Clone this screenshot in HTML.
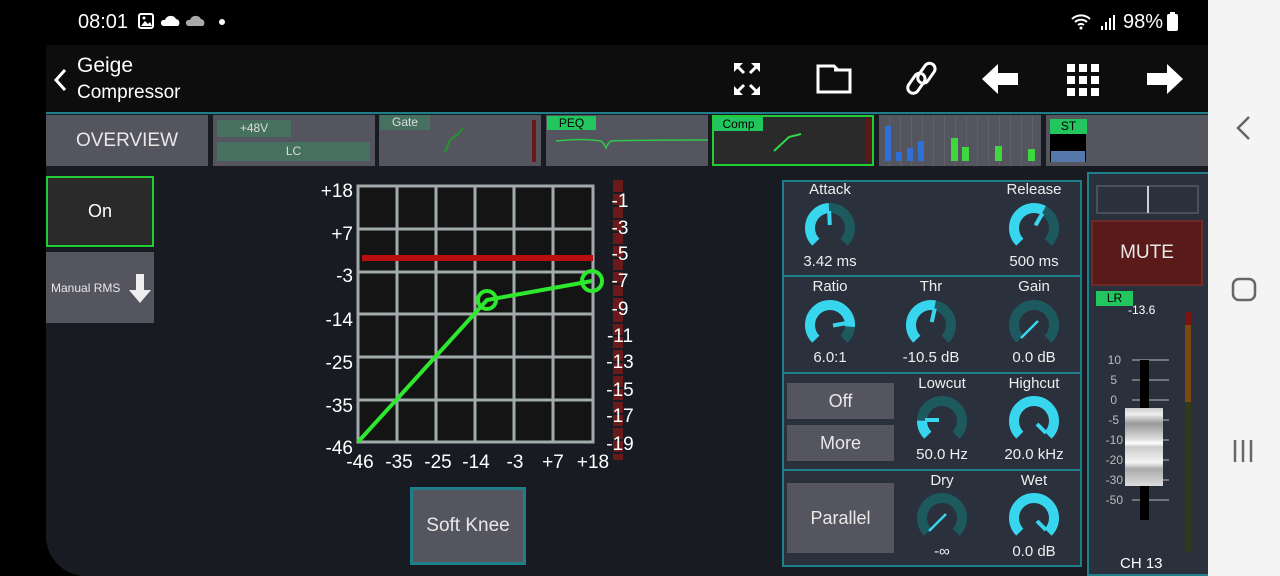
<!DOCTYPE html>
<html><head><meta charset="utf-8">
<style>
*{margin:0;padding:0;box-sizing:border-box}
body{width:1280px;height:576px;background:#000;overflow:hidden;position:relative;font-family:"Liberation Sans",sans-serif;color:#fff}
.a{position:absolute}
.t{position:absolute;white-space:nowrap}
.btn{position:absolute;background:#55555f;color:#e8e8e8;display:flex;align-items:center;justify-content:center}
.pan{position:absolute;background:#2a303c;border:2px solid #1e7f8a}
.lbl{position:absolute;font-size:15px;color:#eee;text-align:center;width:100px;transform:translateX(-50%)}
</style></head><body>
<div class="t" style="left:78px;top:11px;font-size:20px">08:01</div>
<svg class="a" style="left:138px;top:13px" width="90" height="20">
<rect x="1" y="1" width="14" height="14" rx="2" fill="none" stroke="#fff" stroke-width="2"/><path d="M3 13 L7 8 L10 11 L12 9 L14 13Z" fill="#fff"/><circle cx="6" cy="5" r="1.5" fill="#fff"/>
<path d="M25 13 h15 a4 4 0 0 0 -2 -7 a6 6 0 0 0 -11 1 a3 3 0 0 0 -2 6z" fill="#fff"/>
<path d="M50 13 h15 a4 4 0 0 0 -2 -7 a6 6 0 0 0 -11 1 a3 3 0 0 0 -2 6z" fill="#aaa"/>
<circle cx="84" cy="9" r="3" fill="#fff"/></svg>
<svg class="a" style="left:1070px;top:11px" width="50" height="22">
<path d="M2 8 a13 13 0 0 1 18 0 M5 11 a9 9 0 0 1 12 0 M8 14 a5 5 0 0 1 6 0" stroke="#fff" stroke-width="2" fill="none"/><circle cx="11" cy="17" r="1.5" fill="#fff"/>
<rect x="31" y="15" width="2" height="4" fill="#fff"/><rect x="35" y="11" width="2" height="8" fill="#fff"/><rect x="39" y="7" width="2" height="12" fill="#fff"/><rect x="43" y="4" width="2" height="15" fill="#fff"/></svg>
<div class="t" style="left:1123px;top:11px;font-size:20px">98%</div>
<div class="a" style="left:1167px;top:14px;width:11px;height:17px;background:#fff;border-radius:2px"></div>
<div class="a" style="left:1170px;top:12px;width:5px;height:3px;background:#fff"></div>
<div class="a" style="left:1208px;top:0;width:72px;height:576px;background:#f4f4f4"></div>
<svg class="a" style="left:1208px;top:0" width="72" height="576">
<path d="M41 117 L30 128 L41 139" stroke="#666" stroke-width="2.5" fill="none"/>
<rect x="25" y="279" width="22" height="21" rx="6" fill="none" stroke="#666" stroke-width="2.5"/>
<path d="M27 440v22M35 440v22M43 440v22" stroke="#666" stroke-width="2.5"/></svg>
<div class="a" style="left:46px;top:45px;width:1162px;height:531px;background:#181b21;border-bottom-left-radius:40px;overflow:hidden">
<div class="a" style="left:0;top:0;width:1162px;height:67px;background:#0d0d0d"></div>
<div class="a" style="left:0;top:67px;width:1162px;height:2px;background:#1e7f8a"></div>
</div>
<svg class="a" style="left:50px;top:65px" width="20" height="30"><path d="M15 5 L6 15 L15 25" stroke="#fff" stroke-width="3" fill="none"/></svg>
<div class="t" style="left:77px;top:54px;font-size:21px">Geige</div>
<div class="t" style="left:77px;top:82px;font-size:19px">Compressor</div>
<svg class="a" style="left:720px;top:55px" width="480" height="50">
<g fill="#fff" stroke="#fff" stroke-width="3">
<path d="M16 10 L24 18 M38 10 L30 18 M16 38 L24 30 M38 38 L30 30" fill="none"/>
<path d="M14 8h9l-9 9z M40 8h-9l9 9z M14 40h9l-9-9z M40 40h-9l9-9z" stroke="none"/>
<path d="M98 11h16l4 4h12v22h-32z M114 15h16" fill="none" stroke-width="3"/>
<g fill="none" stroke-width="3"><rect x="185" y="23" width="22" height="11" rx="5.5" transform="rotate(-55 196 28)"/><rect x="195" y="13" width="22" height="11" rx="5.5" transform="rotate(-55 206 18)"/></g>
<path d="M262 24 L278 9 V18 H298 V30 H278 V39 Z" stroke="none"/>
<g stroke="none"><rect x="347" y="9" width="8" height="8"/><rect x="359" y="9" width="8" height="8"/><rect x="371" y="9" width="8" height="8"/><rect x="347" y="21" width="8" height="8"/><rect x="359" y="21" width="8" height="8"/><rect x="371" y="21" width="8" height="8"/><rect x="347" y="33" width="8" height="8"/><rect x="359" y="33" width="8" height="8"/><rect x="371" y="33" width="8" height="8"/></g>
<path d="M463 24 L447 9 V18 H427 V30 H447 V39 Z" stroke="none"/>
</g></svg>
<div class="btn" style="left:46px;top:115px;width:162px;height:51px;font-size:19px">OVERVIEW</div>
<div class="a" style="left:213px;top:115px;width:162px;height:51px;background:#55555f"></div>
<div class="t" style="left:217px;top:120px;width:74px;height:17px;background:#46705f;font-size:12px;text-align:center;line-height:17px;color:#ddd">+48V</div>
<div class="t" style="left:217px;top:142px;width:153px;height:19px;background:#46705f;font-size:12px;text-align:center;line-height:19px;color:#ddd">LC</div>
<div class="a" style="left:379px;top:115px;width:162px;height:51px;background:#55555f"></div>
<div class="t" style="left:380px;top:115px;width:50px;height:15px;background:#46705f;font-size:12px;text-align:center;line-height:15px;color:#ddd">Gate</div>
<div class="a" style="left:532px;top:120px;width:4px;height:42px;background:#6a1a1a"></div>
<svg class="a" style="left:379px;top:115px" width="162" height="51"><path d="M66 37 L71 25 L79 19 L84 13" stroke="#2a8a3a" stroke-width="2.5" fill="none"/></svg>
<div class="a" style="left:546px;top:115px;width:162px;height:51px;background:#55555f"></div>
<div class="t" style="left:547px;top:116px;width:49px;height:14px;background:#22c55e;font-size:12px;text-align:center;line-height:14px;color:#000">PEQ</div>
<svg class="a" style="left:546px;top:115px" width="162" height="51"><path d="M10 26 C30 24 40 24 55 26 Q58 28 60 33 Q62 28 65 26 C90 25 130 25 162 25" stroke="#2fc84a" stroke-width="1.5" fill="none"/></svg>
<div class="a" style="left:712px;top:115px;width:162px;height:51px;background:#2a2a2a;border:2px solid #22cc33"></div>
<div class="t" style="left:714px;top:117px;width:49px;height:14px;background:#22c55e;font-size:12px;text-align:center;line-height:14px;color:#000">Comp</div>
<div class="a" style="left:865px;top:118px;width:6px;height:44px;background:#5a1a1a"></div>
<svg class="a" style="left:712px;top:115px" width="162" height="51"><path d="M62 36 L77 22 L89 19" stroke="#2fd84a" stroke-width="2" fill="none"/></svg>
<div class="a" style="left:879px;top:115px;width:162px;height:51px;background:#55555f;background-image:repeating-linear-gradient(90deg,transparent 0 10px,#606068 10px 11px)"></div>
<svg class="a" style="left:879px;top:115px" width="162" height="51"><g fill="#2f6fd8"><rect x="6" y="11" width="6" height="35"/><rect x="17" y="37" width="6" height="9"/><rect x="28" y="33" width="6" height="13"/><rect x="39" y="26" width="6" height="20"/></g><g fill="#3ed83e"><rect x="72" y="23" width="7" height="23"/><rect x="83" y="32" width="7" height="14"/><rect x="116" y="31" width="7" height="15"/><rect x="149" y="34" width="7" height="12"/></g></svg>
<div class="a" style="left:1046px;top:115px;width:162px;height:51px;background:#55555f"></div>
<div class="t" style="left:1050px;top:119px;width:37px;height:15px;background:#22c55e;font-size:12px;text-align:center;line-height:15px;color:#000">ST</div>
<div class="a" style="left:1050px;top:134px;width:36px;height:28px;background:#000"></div>
<div class="a" style="left:1051px;top:151px;width:34px;height:11px;background:#5577aa"></div>
<div class="btn" style="left:46px;top:176px;width:108px;height:71px;background:#2a2a2a;border:2px solid #22cc33;font-size:18px;color:#fff">On</div>
<div class="btn" style="left:46px;top:252px;width:108px;height:71px;justify-content:flex-start;padding-left:5px;font-size:12px">Manual RMS</div>
<svg class="a" style="left:127px;top:272px" width="26" height="34"><path d="M9 2h8v16h7L13 31 2 18h7z" fill="#eee"/></svg>
<svg class="a" style="left:300px;top:170px" width="340" height="310" font-family="Liberation Sans" font-size="19" fill="#fff">
<rect x="58" y="16" width="235" height="256" fill="#141414"/>
<g stroke="#a2abab" stroke-width="3" fill="none">
<rect x="58" y="16" width="235" height="256"/>
<path d="M97 16V272M136 16V272M175 16V272M214 16V272M253 16V272M58 59H293M58 102H293M58 144H293M58 187H293M58 230H293"/></g>
<path d="M62 88H293" stroke="#b80e0e" stroke-width="6"/>
<path d="M58 272L187 130L292 111" stroke="#2ee82e" stroke-width="4" fill="none"/>
<circle cx="187" cy="130" r="9" stroke="#2ee82e" stroke-width="4" fill="none"/>
<circle cx="292" cy="111" r="10" stroke="#2ee82e" stroke-width="4" fill="none"/>
<g text-anchor="end"><text x="53" y="27">+18</text><text x="53" y="70">+7</text><text x="53" y="112">-3</text><text x="53" y="156">-14</text><text x="53" y="199">-25</text><text x="53" y="242">-35</text><text x="53" y="284">-46</text></g>
<g text-anchor="middle"><text x="60" y="298">-46</text><text x="99" y="298">-35</text><text x="138" y="298">-25</text><text x="176" y="298">-14</text><text x="215" y="298">-3</text><text x="253" y="298">+7</text><text x="293" y="298">+18</text></g>
<rect x="313" y="10" width="10" height="280" fill="#6a1a1a"/>
<g stroke="#181b21" stroke-width="2"><path d="M313 23h10M313 36h10M313 49h10M313 62h10M313 75h10M313 88h10M313 101h10M313 114h10M313 127h10M313 140h10M313 153h10M313 166h10M313 179h10M313 192h10M313 205h10M313 218h10M313 231h10M313 244h10M313 257h10M313 270h10M313 283h10"/></g>
<g text-anchor="middle"><text x="320" y="37">-1</text><text x="320" y="64">-3</text><text x="320" y="90">-5</text><text x="320" y="117">-7</text><text x="320" y="145">-9</text><text x="320" y="172">-11</text><text x="320" y="198">-13</text><text x="320" y="226">-15</text><text x="320" y="252">-17</text><text x="320" y="280">-19</text></g>
</svg>
<div class="btn" style="left:410px;top:487px;width:116px;height:78px;border:3px solid #1e7f8a;font-size:19px">Soft Knee</div>
<div class="pan" style="left:782px;top:180px;width:300px;height:97px"></div>
<div class="pan" style="left:782px;top:275px;width:300px;height:99px"></div>
<div class="pan" style="left:782px;top:372px;width:300px;height:99px"></div>
<div class="pan" style="left:782px;top:469px;width:300px;height:98px"></div>
<div class="lbl" style="left:830px;top:181px">Attack</div><div class="lbl" style="left:830px;top:253px">3.42 ms</div>
<div class="lbl" style="left:1034px;top:181px">Release</div><div class="lbl" style="left:1034px;top:253px">500 ms</div>
<div class="lbl" style="left:830px;top:278px">Ratio</div><div class="lbl" style="left:830px;top:349px">6.0:1</div>
<div class="lbl" style="left:931px;top:278px">Thr</div><div class="lbl" style="left:931px;top:349px">-10.5 dB</div>
<div class="lbl" style="left:1034px;top:278px">Gain</div><div class="lbl" style="left:1034px;top:349px">0.0 dB</div>
<div class="lbl" style="left:942px;top:375px">Lowcut</div><div class="lbl" style="left:942px;top:446px">50.0 Hz</div>
<div class="lbl" style="left:1034px;top:375px">Highcut</div><div class="lbl" style="left:1034px;top:446px">20.0 kHz</div>
<div class="lbl" style="left:942px;top:472px">Dry</div><div class="lbl" style="left:942px;top:543px">-∞</div>
<div class="lbl" style="left:1034px;top:472px">Wet</div><div class="lbl" style="left:1034px;top:543px">0.0 dB</div>
<div class="btn" style="left:787px;top:383px;width:107px;height:36px;font-size:18px">Off</div>
<div class="btn" style="left:787px;top:425px;width:107px;height:36px;font-size:18px">More</div>
<div class="btn" style="left:787px;top:483px;width:107px;height:70px;font-size:18px">Parallel</div>
<svg class="a" style="left:0;top:0" width="1208" height="576">
<defs><g id="tr"><circle r="20" fill="none" stroke="#1d5a60" stroke-width="10" stroke-dasharray="94.2 200" transform="rotate(135)"/></g></defs>
<g transform="translate(830,228)"><use href="#tr"/><circle r="20" fill="none" stroke="#38d6ee" stroke-width="10" stroke-dasharray="46 200" transform="rotate(135)"/><line x1="-0.2" y1="-3" x2="-0.9" y2="-17" stroke="#38d6ee" stroke-width="4"/></g>
<g transform="translate(1034,228)"><use href="#tr"/><circle r="20" fill="none" stroke="#38d6ee" stroke-width="10" stroke-dasharray="57 200" transform="rotate(135)"/><line x1="1.5" y1="-2.6" x2="8.5" y2="-14.7" stroke="#38d6ee" stroke-width="4"/></g>
<g transform="translate(830,325)"><use href="#tr"/><circle r="20" fill="none" stroke="#38d6ee" stroke-width="10" stroke-dasharray="80 200" transform="rotate(135)"/><line x1="3" y1="0.5" x2="17" y2="-2" stroke="#38d6ee" stroke-width="4"/></g>
<g transform="translate(931,325)"><use href="#tr"/><circle r="20" fill="none" stroke="#38d6ee" stroke-width="10" stroke-dasharray="51 200" transform="rotate(135)"/><line x1="0.7" y1="-2.9" x2="3.8" y2="-16.6" stroke="#38d6ee" stroke-width="4"/></g>
<g transform="translate(1034,325)"><use href="#tr"/><line x1="4" y1="-4" x2="-13" y2="13" stroke="#38d6ee" stroke-width="2.5"/></g>
<g transform="translate(942,421)"><use href="#tr"/><circle r="20" fill="none" stroke="#38d6ee" stroke-width="10" stroke-dasharray="16 200" transform="rotate(135)"/><line x1="-3" y1="-1" x2="-17" y2="-1" stroke="#38d6ee" stroke-width="4"/></g>
<g transform="translate(1034,421)"><circle r="20" fill="none" stroke="#38d6ee" stroke-width="10" stroke-dasharray="94.2 200" transform="rotate(135)"/><line x1="3" y1="3" x2="12" y2="12" stroke="#38d6ee" stroke-width="4"/></g>
<g transform="translate(942,518)"><use href="#tr"/><line x1="4" y1="-4" x2="-13" y2="13" stroke="#38d6ee" stroke-width="2.5"/></g>
<g transform="translate(1034,518)"><circle r="20" fill="none" stroke="#38d6ee" stroke-width="10" stroke-dasharray="94.2 200" transform="rotate(135)"/><line x1="3" y1="3" x2="12" y2="12" stroke="#38d6ee" stroke-width="4"/></g>
</svg>
<div class="a" style="left:1087px;top:172px;width:121px;height:404px;background:#2a303c;border:2px solid #1e7f8a;border-right:none"></div>
<div class="a" style="left:1096px;top:185px;width:103px;height:29px;border:2px solid #4a505a;background:#2a303c"></div>
<div class="a" style="left:1147px;top:186px;width:2px;height:27px;background:#ccd"></div>
<div class="btn" style="left:1091px;top:220px;width:112px;height:66px;background:#5a1a1a;border:2px solid #6e2a2a;font-size:19px">MUTE</div>
<div class="t" style="left:1096px;top:291px;width:37px;height:15px;background:#22c55e;font-size:12px;text-align:center;line-height:15px;color:#000">LR</div>
<div class="t" style="left:1128px;top:303px;font-size:12px">-13.6</div>
<svg class="a" style="left:1087px;top:300px" width="121" height="276" font-family="Liberation Sans" font-size="12" fill="#bbb">
<g text-anchor="end"><text x="34" y="64">10</text><text x="30" y="84">5</text><text x="30" y="104">0</text><text x="32" y="124">-5</text><text x="36" y="144">-10</text><text x="36" y="164">-20</text><text x="36" y="184">-30</text><text x="36" y="204">-50</text></g>
<g stroke="#bbb" stroke-width="1"><path d="M45 60h37M45 80h37M45 100h37M45 120h37M45 140h37M45 160h37M45 180h37M45 200h37"/></g>
<rect x="53" y="60" width="9" height="160" fill="#000"/>
<defs><linearGradient id="fg" x1="0" y1="0" x2="0" y2="1"><stop offset="0" stop-color="#ccc"/><stop offset=".08" stop-color="#eee"/><stop offset=".2" stop-color="#999"/><stop offset=".3" stop-color="#bbb"/><stop offset=".4" stop-color="#ddd"/><stop offset=".45" stop-color="#fff"/><stop offset=".5" stop-color="#ccc"/><stop offset=".7" stop-color="#f4f4f4"/><stop offset=".78" stop-color="#aaa"/><stop offset="1" stop-color="#ddd"/></linearGradient></defs>
<rect x="38" y="108" width="38" height="78" fill="url(#fg)"/>
<rect x="98" y="12" width="6" height="13" fill="#7a1414"/><rect x="98" y="25" width="6" height="77" fill="#7a4a14"/><rect x="98" y="102" width="6" height="150" fill="#2e3a1a"/>
</svg>
<div class="t" style="left:1120px;top:555px;font-size:15px">CH 13</div>
</body></html>
